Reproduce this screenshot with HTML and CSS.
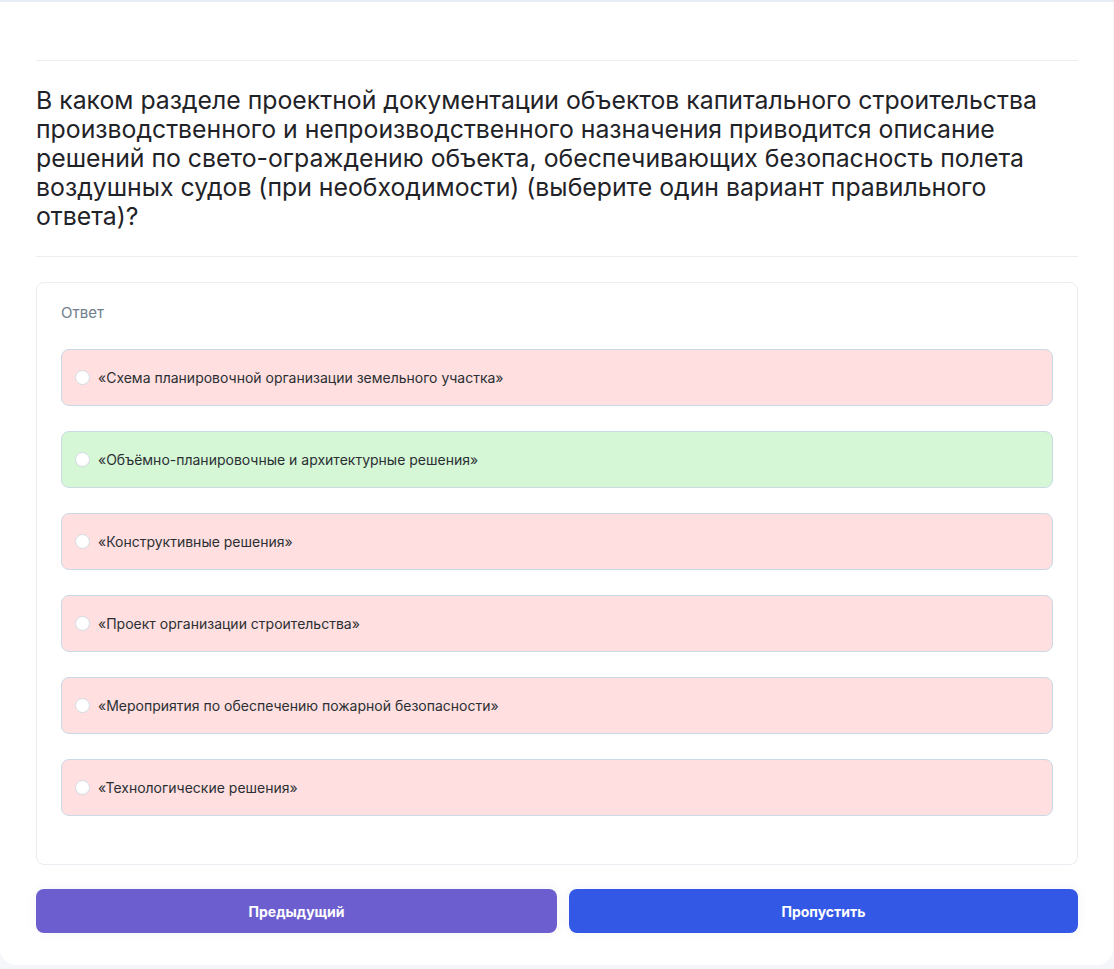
FILE: index.html
```html
<!DOCTYPE html>
<html lang="ru">
<head>
<meta charset="utf-8">
<link rel="stylesheet" href="styles.css">
</head>
<body>
<div class="page">
  <div class="card">
    <hr class="sep top">
    <h1 class="question">В каком разделе проектной документации объектов капитального строительства производственного и непроизводственного назначения приводится описание решений по свето-ограждению объекта, обеспечивающих безопасность полета воздушных судов (при необходимости) (выберите один вариант правильного ответа)?</h1>
    <hr class="sep bottom">
    <div class="answers">
      <div class="label">Ответ</div>
      <div class="options">
        <div class="option wrong"><span class="radio"></span><span>«Схема планировочной организации земельного участка»</span></div>
        <div class="option right"><span class="radio"></span><span>«Объёмно-планировочные и архитектурные решения»</span></div>
        <div class="option wrong"><span class="radio"></span><span>«Конструктивные решения»</span></div>
        <div class="option wrong"><span class="radio"></span><span>«Проект организации строительства»</span></div>
        <div class="option wrong"><span class="radio"></span><span>«Мероприятия по обеспечению пожарной безопасности»</span></div>
        <div class="option wrong"><span class="radio"></span><span>«Технологические решения»</span></div>
      </div>
    </div>
    <div class="buttons">
      <button class="btn prev">Предыдущий</button>
      <button class="btn skip">Пропустить</button>
    </div>
  </div>
</div>
</body>
</html>
```
FILE: styles.css
```css
html, body {
  margin: 0;
  padding: 0;
  background: #f4f6f9;
  font-family: Inter, "Noto Sans", sans-serif;
}
.page {
  border-top: 2px solid #e6edf5;
  height: 967px;
  box-sizing: border-box;
}
.card {
  background: #ffffff;
  width: 1113px;
  height: 963px;
  box-sizing: border-box;
  border-radius: 0 0 16px 16px;
  padding: 58px 35px 0 36px;
}
.sep {
  border: 0;
  border-top: 1px solid #eceef2;
  margin: 0;
  width: 1042px;
}
.question {
  font-size: 24.8px;
  font-weight: 400;
  line-height: 29px;
  color: #1f2328;
  margin: 25px 0 25px 0;
  width: 1042px;
}
.answers {
  margin-top: 25px;
  width: 1042px;
  box-sizing: border-box;
  border: 1px solid #e9edf2;
  border-radius: 8px;
  padding: 20px 24px 48px 24px;
}
.label {
  font-size: 15px;
  line-height: 20px;
  color: #6f7e8c;
  margin-bottom: 26px;
}
.options {
  display: flex;
  flex-direction: column;
  gap: 25px;
}
.option {
  height: 57px;
  box-sizing: border-box;
  border: 1px solid #c9dae6;
  border-radius: 8px;
  display: flex;
  align-items: center;
  padding-left: 13px;
  font-size: 14px;
  color: #2b2f33;
  gap: 8px;
}
.option.wrong { background: #ffdfe0; }
.option.right { background: #d5f7d6; }
.radio {
  width: 15px;
  height: 15px;
  border-radius: 50%;
  background: #ffffff;
  border: 1px solid #d3dae3;
  box-sizing: border-box;
  flex: none;
}
.buttons {
  display: flex;
  gap: 12px;
  margin-top: 24px;
  width: 1042px;
}
.btn {
  height: 44px;
  border: 0;
  border-radius: 8px;
  color: #ffffff;
  font-family: Inter, "Noto Sans", sans-serif;
  font-weight: 700;
  font-size: 14px;
  box-shadow: 0 0 12px rgba(30, 50, 90, 0.05);
}
.btn.prev { background: #6c5ecf; width: 521px; flex: none; }
.btn.skip { background: #3358e6; flex: 1; }
```
